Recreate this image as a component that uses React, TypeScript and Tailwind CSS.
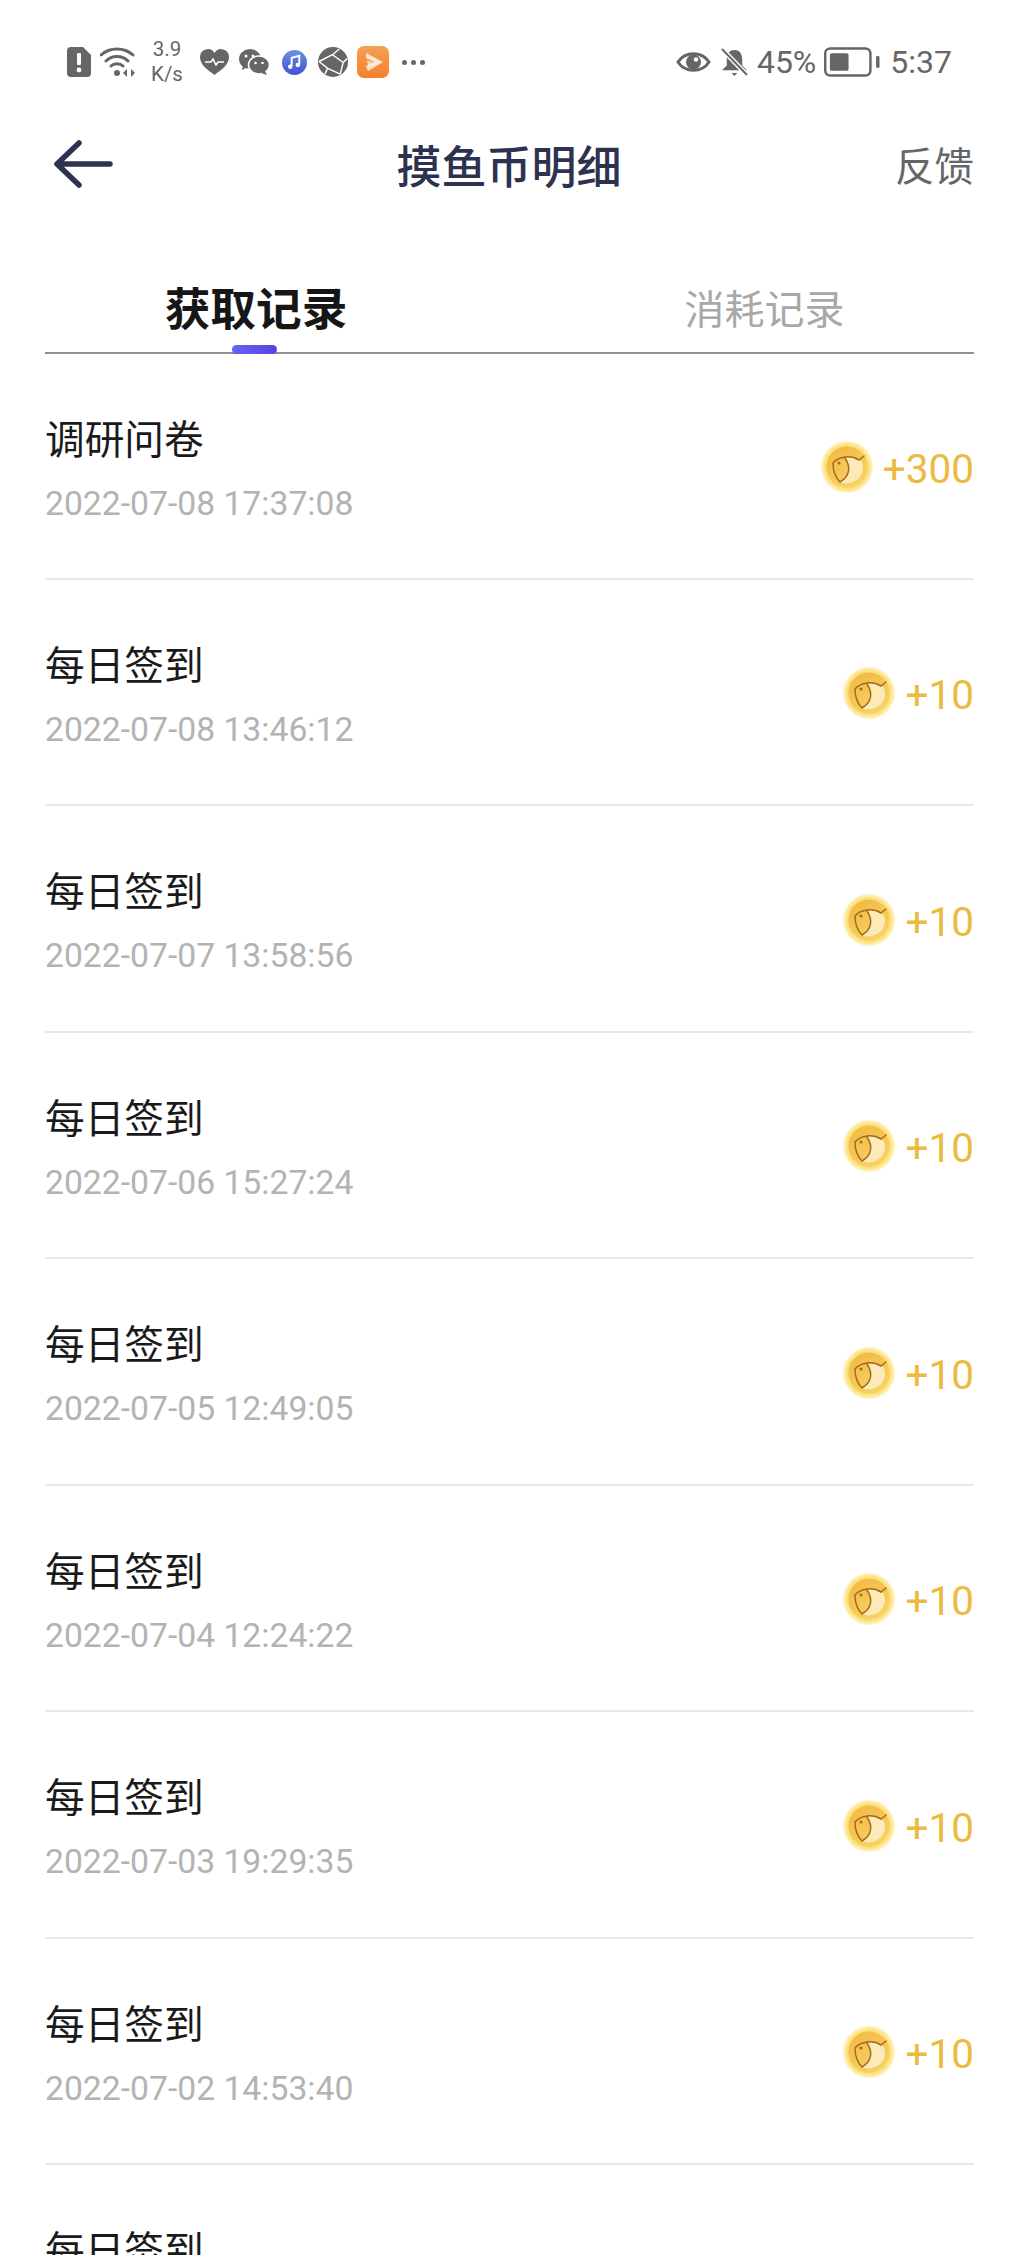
const rows = [
  ["调研问卷", "2022-07-08 17:37:08", "+300"],
  ["每日签到", "2022-07-08 13:46:12", "+10"],
  ["每日签到", "2022-07-07 13:58:56", "+10"],
  ["每日签到", "2022-07-06 15:27:24", "+10"],
  ["每日签到", "2022-07-05 12:49:05", "+10"],
  ["每日签到", "2022-07-04 12:24:22", "+10"],
  ["每日签到", "2022-07-03 19:29:35", "+10"],
  ["每日签到", "2022-07-02 14:53:40", "+10"],
];

const FONT = "font-['Roboto','Noto_Sans_CJK_SC',sans-serif]";

function Coin() {
  return (
    <svg width="52" height="52" viewBox="0 0 52 52" className="shrink-0">
      <defs>
        <radialGradient id="coinOuter" cx="0.5" cy="0.5" r="0.5">
          <stop offset="0.72" stopColor="#fad452" />
          <stop offset="0.9" stopColor="#fee897" />
          <stop offset="1" stopColor="#fff5cf" />
        </radialGradient>
        <linearGradient id="coinInner" x1="0.2" y1="0" x2="0.8" y2="1">
          <stop offset="0" stopColor="#f2b945" />
          <stop offset="1" stopColor="#f8d468" />
        </linearGradient>
      </defs>
      <circle cx="26" cy="26" r="26" fill="url(#coinOuter)" />
      <circle cx="26" cy="26" r="20.500" fill="url(#coinInner)" />
      <path d="M24 17 C30 15 36 16 40 20 C44 26 42 36 34 40 C29 43 23 43 19 41 C28 36 30 26 24 17Z" fill="#fcebb8" />
      <path d="M12 22 C18 15 30 14 38 19 L43 15 M12 22 C12 30 14 36 19 41 M24 17 C30 26 29 35 19 41" fill="none" stroke="#a66c1c" strokeWidth="1.500" strokeLinecap="round" />
      <circle cx="18" cy="22" r="1.500" fill="#a66c1c" />
    </svg>
  );
}

function StatusLeft() {
  return (
    <div className="flex items-center text-[#666]">
      <svg width="24" height="30" viewBox="0 0 24 30" className="ml-[67px]">
        <path d="M4 0H16L24 8V26a4 4 0 0 1-4 4H4a4 4 0 0 1-4-4V4a4 4 0 0 1 4-4Z" fill="#666" />
        <rect x="10" y="6" width="4" height="12" rx="1" fill="#fff" />
        <circle cx="12" cy="23" r="2.400" fill="#fff" />
      </svg>
      <svg width="36" height="30" viewBox="0 0 36 30" className="ml-[9px]">
        <path d="M1 8C10 0 24 0 33 8M6 14C12 8 22 8 28 14M11 19C14 16 20 16 23 19" fill="none" stroke="#666" strokeWidth="3" strokeLinecap="round" />
        <circle cx="17" cy="26" r="3" fill="#666" />
        <path d="M27 22l-4 4 4 4ZM31 22l4 4-4 4Z" fill="#666" />
      </svg>
      <div className={`ml-[13px] w-[36px] text-center text-[20.500px] leading-[25px] ${FONT}`}>
        <div>3.9</div>
        <div>K/s</div>
      </div>
      <svg width="29" height="26" viewBox="0 0 29 26" className="ml-[15px]">
        <path d="M14.500 26C8 21 0 16 0 8a7.800 7.800 0 0 1 14.500-4A7.800 7.800 0 0 1 29 8c0 8-8 13-14.500 18Z" fill="#666" />
        <path d="M5 13h6l2-3 3 6 2-3h6" fill="none" stroke="#fff" strokeWidth="1.500" />
      </svg>
      <svg width="30" height="26" viewBox="0 0 30 26" className="ml-[10px]">
        <ellipse cx="11" cy="10" rx="11" ry="10" fill="#666" />
        <path d="M4 16l-1 5 6-3Z" fill="#666" />
        <ellipse cx="20" cy="16" rx="10.500" ry="9" fill="#666" stroke="#fff" strokeWidth="1.500" />
        <path d="M26 22l2 4-6-2Z" fill="#666" />
        <circle cx="7" cy="7" r="1.500" fill="#fff" />
        <circle cx="14" cy="7" r="1.500" fill="#fff" />
        <circle cx="16.500" cy="14" r="1.300" fill="#fff" />
        <circle cx="23.500" cy="14" r="1.300" fill="#fff" />
      </svg>
      <svg width="25" height="25" viewBox="0 0 26 26" className="ml-[13px]">
        <defs>
          <linearGradient id="music" x1="0" y1="0" x2="0" y2="1">
            <stop offset="0" stopColor="#6f8fe0" />
            <stop offset="1" stopColor="#3d53d8" />
          </linearGradient>
        </defs>
        <circle cx="13" cy="13" r="13" fill="url(#music)" />
        <path d="M10 17V8l8-2v9" fill="none" stroke="#fff" strokeWidth="2" />
        <circle cx="8.500" cy="17.500" r="2.300" fill="#fff" />
        <circle cx="16.500" cy="15.500" r="2.300" fill="#fff" />
      </svg>
      <svg width="30" height="30" viewBox="0 0 31 31" className="ml-[11px]">
        <circle cx="15.500" cy="15.500" r="15.500" fill="#666" />
        <path d="M1 15L15 8L22 2M15 8L26 16L23 28M26 16L30 12M1 15L10 22L23 28M10 22L7 28" fill="none" stroke="#fff" strokeWidth="1.500" />
      </svg>
      <svg width="32" height="32" viewBox="0 0 32 32" className="ml-[9px]">
        <defs>
          <linearGradient id="playBg" x1="0" y1="0" x2="0" y2="1">
            <stop offset="0" stopColor="#f6a052" />
            <stop offset="1" stopColor="#f5812a" />
          </linearGradient>
        </defs>
        <rect width="32" height="32" rx="7" fill="url(#playBg)" />
        <path d="M9 7L26 16L11 25L9 20L17 16L9 12Z" fill="#fde7d3" />
        <path d="M10 14L16 16.500L11 20Z" fill="#fde7d3" opacity="0.800" />
      </svg>
      <div className="ml-[13px] flex gap-[4px]">
        <span className="size-[5px] rounded-full bg-[#666]" />
        <span className="size-[5px] rounded-full bg-[#666]" />
        <span className="size-[5px] rounded-full bg-[#666]" />
      </div>
    </div>
  );
}

function StatusRight() {
  return (
    <div className={`flex items-center pr-[68px] text-[32px] leading-none text-[#666] ${FONT}`}>
      <svg width="35" height="26" viewBox="0 0 35 26">
        <path d="M2 13C9 2 26 2 33 13C26 24 9 24 2 13Z" fill="none" stroke="#666" strokeWidth="3" />
        <circle cx="17.500" cy="13" r="7.500" fill="#666" />
        <circle cx="20" cy="10.500" r="2.200" fill="#fff" />
      </svg>
      <svg width="27" height="29" viewBox="0 0 28 30" className="ml-[10px]">
        <path d="M14 2C8 2 6 7 6 12V18L1 23H27L22 18V12C22 7 20 2 14 2Z" fill="#666" />
        <path d="M11 26h6l-3 3Z" fill="#666" />
        <path d="M1 1L27 28" stroke="#fff" strokeWidth="5" />
        <path d="M1 1L27 28" stroke="#666" strokeWidth="2" />
      </svg>
      <span className="ml-[9px]">45%</span>
      <svg width="56" height="30" viewBox="0 0 57 30" className="ml-[8px]">
        <rect x="1.250" y="1.250" width="46" height="27.500" rx="5" fill="none" stroke="#666" strokeWidth="2.500" />
        <rect x="6" y="6" width="19" height="18" rx="2" fill="#666" />
        <rect x="53" y="9" width="3.500" height="12" rx="1.500" fill="#666" />
      </svg>
      <span className="ml-[10px]">5:37</span>
    </div>
  );
}

function Row({ title, time, amount }: { title: string; time: string; amount: string }) {
  return (
    <div className="flex h-[226.500px] items-center justify-between border-b-2 border-[#e8e8e8] pb-[2px] first:h-[225.500px]">
      <div className="pt-[9px]">
        <div className="text-[39.700px] leading-[52px] text-[#1a1a1a]">{title}</div>
        <div className="mt-[17px] text-[33.700px] leading-[40px] text-[#b3b3b3]">{time}</div>
      </div>
      <div className="flex items-center pt-[5px]">
        <Coin />
        <span className="ml-[10px] pt-[4px] text-[40.500px] leading-none text-[#ecba3e]">{amount}</span>
      </div>
    </div>
  );
}

export default function App() {
  return (
    <div className={`h-[2255px] w-[1020px] overflow-hidden bg-white ${FONT}`}>
      <div className="flex h-[82px] items-center justify-between pt-[42px]">
        <StatusLeft />
        <StatusRight />
      </div>
      <div className="mt-[53px] flex h-[66px] items-center justify-between pl-[52px] pr-[46px]">
        <svg width="62" height="48" viewBox="0 0 62 48" className="mb-[8px]">
          <path d="M58 24H5M27 3L5 24L27 45" fill="none" stroke="#2d3250" strokeWidth="5.500" strokeLinecap="round" strokeLinejoin="round" />
        </svg>
        <div className="pl-[9px] text-[45px] font-medium leading-none text-[#2d3250]">摸鱼币明细</div>
        <div className="text-[39.500px] leading-none text-[#666]">反馈</div>
      </div>
      <div className="ml-[45px] mt-[67px] flex h-[86px] w-[929px] border-b-2 border-[#909090]">
        <div className="relative flex h-full w-[422px] items-center justify-center pt-[2px] text-[45.700px] font-bold leading-none text-[#161616]">
          获取记录
          <span className="absolute bottom-[-2px] left-[187px] h-[9px] w-[45px] rounded-full bg-gradient-to-r from-[#6366f1] to-[#5b3fe0]" />
        </div>
        <div className="flex h-full flex-1 items-center justify-center pl-[88px] pt-[2px] text-[40px] leading-none text-[#a8a8a8]">消耗记录</div>
      </div>
      <div className="ml-[45px] w-[929px]">
        {rows.map((r, i) => (
          <Row key={i} title={r[0]} time={r[1]} amount={r[2]} />
        ))}
        <div className="pt-[61px] text-[39.700px] leading-[52px] text-[#1a1a1a]">每日签到</div>
      </div>
    </div>
  );
}
